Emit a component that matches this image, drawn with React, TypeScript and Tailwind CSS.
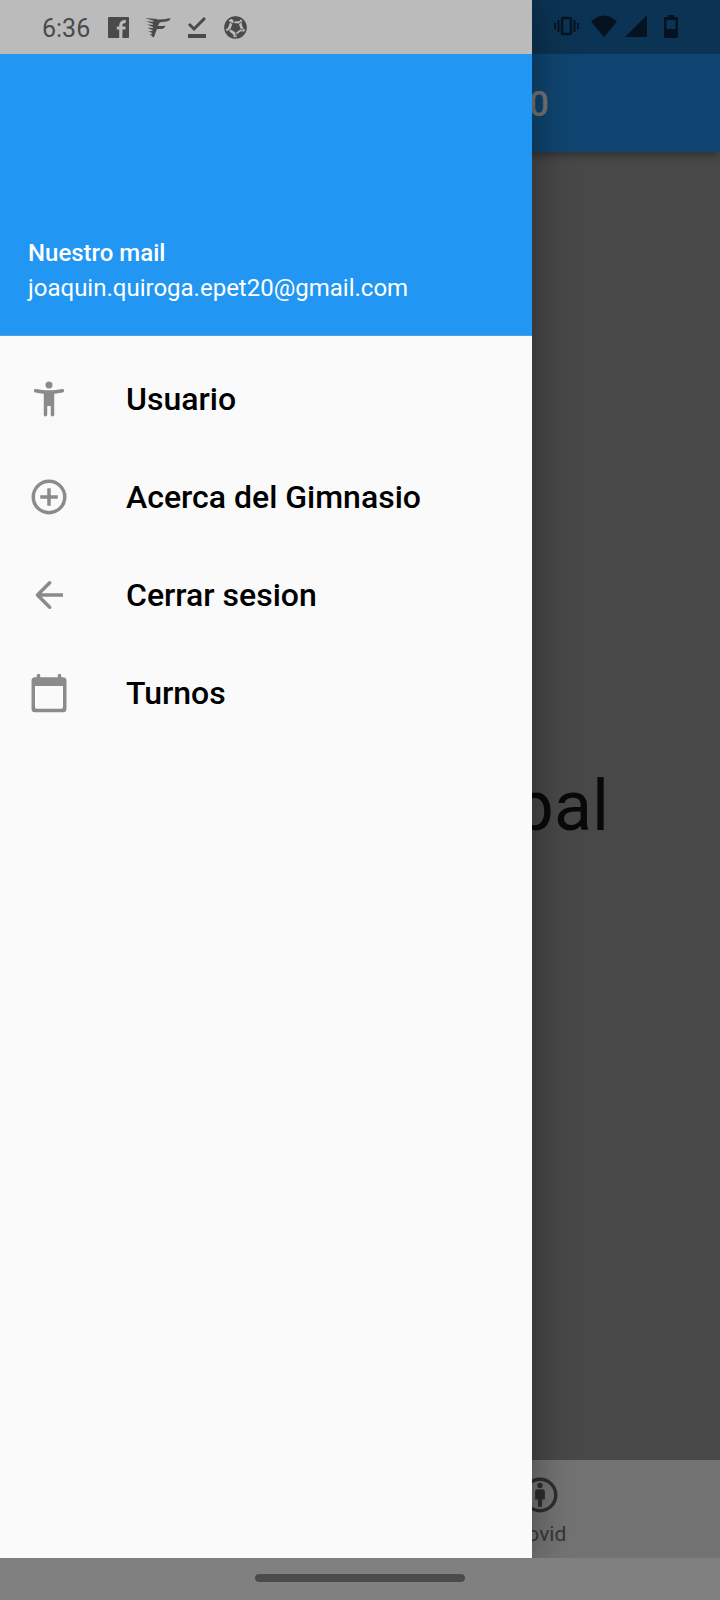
import type { ReactNode } from "react";

function DrawerIcon({ children }: { children: ReactNode }) {
  return (
    <svg viewBox="0 0 24 24" className="size-[42px] shrink-0 text-[#8b8b8b]" fill="currentColor" aria-hidden="true">
      {children}
    </svg>
  );
}

const items = [
  {
    label: "Usuario",
    icon: (
      <>
        <circle cx="12" cy="4" r="2" />
        <path d="M9 9v12a1 1 0 0 0 2 0v-5h2v5a1 1 0 0 0 2 0V9c1.600-.14 3.300-.38 4.850-.73a1 1 0 0 0 .75-1.220 1 1 0 0 0-1.210-.75C17.060 6.800 14.470 7 12 7s-5.060-.2-7.390-.7a1 1 0 0 0-1.210.75 1 1 0 0 0 .75 1.220C5.700 8.620 7.400 8.860 9 9z" />
      </>
    ),
  },
  {
    label: "Acerca del Gimnasio",
    icon: (
      <g fill="none" stroke="currentColor" strokeWidth="2">
        <circle cx="12" cy="12" r="9" />
        <path d="M12 7v10M7 12h10" />
      </g>
    ),
  },
  {
    label: "Cerrar sesion",
    icon: <path d="M20 11H7.830l5.300-5.300a1 1 0 0 0-1.420-1.410l-7 7a1 1 0 0 0 0 1.420l7 7a1 1 0 0 0 1.420-1.410L7.830 13H20z" />,
  },
  {
    label: "Turnos",
    icon: (
      <path
        fillRule="evenodd"
        d="M20 3h-1V2a1 1 0 0 0-2 0v1H7V2a1 1 0 0 0-2 0v1H4a2 2 0 0 0-2 2v16a2 2 0 0 0 2 2h16a2 2 0 0 0 2-2V5a2 2 0 0 0-2-2zM4 8h16v12a1 1 0 0 1-1 1H5a1 1 0 0 1-1-1z"
      />
    ),
  },
];

function StatusBar() {
  return (
    <div className="absolute inset-x-0 top-0 flex h-[54px] items-center justify-between bg-black/25 pr-[42px] pl-[42px]">
      <div className="flex items-center text-[#4a4a4a]">
        <time className="w-[66px] pt-1 text-[25px] leading-7">6:36</time>
        <svg viewBox="0 0 21 21" className="size-[21px]" aria-hidden="true">
          <rect width="21" height="21" rx="1" fill="currentColor" />
          <path d="M12.800 21V8.500q0-4.200 5-4M8.800 11h8.700" fill="none" stroke="#bbbbbb" strokeWidth="3.200" />
        </svg>
        <svg viewBox="0 0 26 21" className="ml-4 h-[21px] w-[26px]" aria-hidden="true">
          <path
            fill="currentColor"
            d="M9 2.500Q18 3 25.500 1q-.5 3-4 3.500l-5 .4q-2 .2-2.700 2L13 9h4q2 0 3.500-.5-1 3.300-4 3.500h-4.500l-1.500 4Q9.500 19.500 8.500 20.500L6.500 19l.5-3 1-5 0-5z"
          />
          <path
            fill="currentColor"
            d="M0 1l12 1v3zM1 4.300l11 .7-1 3zM2 7.500l9 .5-1 3zM2.500 10.800l8 .4-1 3zM3.500 14l6 .3-.5 3zM4.500 17l4.500.3-1 2.200z"
          />
        </svg>
        <svg viewBox="0 0 18 21" className="ml-[17px] h-[21px] w-[18px]" fill="none" stroke="currentColor" aria-hidden="true">
          <path d="M1 7l5 5L17 1" strokeWidth="3" />
          <path d="M0 19h18" strokeWidth="4" />
        </svg>
        <svg viewBox="0 0 24 24" className="ml-[18px] size-[23px]" fill="currentColor" aria-hidden="true">
          <circle cx="12" cy="12" r="11" fill="none" stroke="currentColor" strokeWidth="1.600" />
          <path d="M9 7.300l6.500.5 1.800 5.900-4.800 3.800-5.700-3.800zM6.500 1.700l5.500-1.200 6 1.700-1.500 3-5.500.6zM19.500 3.500l3.500 5.500.3 5-3-.5-2-5.500zM22 16.500l-4.500 5-4.500 1.300.5-3.800 4-3zM10 23.500l-5.500-2.500-3-4.500 3.500-1 4.800 4zM.8 14l.5-6L4.500 3.500 6 7.500 4 12.800z" />
          <path d="M9.500 8L5 6M15.500 8l3-2M17 13.500l3 1M12.500 17v4M7.500 13.500L3.500 16M11 4.500l-1 3" fill="none" stroke="currentColor" strokeWidth="1" />
        </svg>
      </div>
      <div className="flex items-center pb-[2px] text-[#04131f]">
        <svg viewBox="0 0 25 20" className="h-[20px] w-[25px]" fill="none" stroke="currentColor" strokeWidth="2" aria-hidden="true">
          <rect x="8" y="2" width="9" height="16" rx="1" strokeWidth="2.500" />
          <path d="M1 7v6M4.500 4v12M20.500 4v12M24 7v6" />
        </svg>
        <svg viewBox="0 0 26 22" className="ml-3 h-[22px] w-[26px]" fill="currentColor" aria-hidden="true">
          <path d="M0 6.500Q13-5.500 26 6.500L13 22z" />
        </svg>
        <svg viewBox="0 0 22 22" className="ml-2 size-[22px]" fill="currentColor" aria-hidden="true">
          <path d="M22 0v22H0z" />
        </svg>
        <svg viewBox="0 0 14 23" className="ml-[17px] h-[23px] w-[14px]" fill="currentColor" aria-hidden="true">
          <path fillRule="evenodd" d="M4 0h6v2h3a1 1 0 0 1 1 1v19a1 1 0 0 1-1 1H1a1 1 0 0 1-1-1V3a1 1 0 0 1 1-1h3zM2.500 5v9h9V5z" />
        </svg>
      </div>
    </div>
  );
}

export default function App() {
  return (
    <div className="relative flex min-h-screen flex-col bg-[#808080] font-[Roboto,sans-serif]">
      <div className="relative flex flex-1 flex-col overflow-hidden bg-[#9d9d9d]">
        <header className="z-0 bg-[#2196f3] pt-[54px] shadow-[0_4px_8px_rgba(0,0,0,0.3)]">
          <h1 className="flex h-[98px] items-center justify-end pt-1 pr-[171px] text-[35px] font-medium text-white">
            EPET 20
          </h1>
        </header>
        <main className="flex flex-1 items-center justify-end pr-[111px]">
          <p className="text-[70px] leading-[84px] text-black/87">Principal</p>
        </main>
        <nav className="grid h-[98px] grid-cols-2 bg-[#fbfbfb] text-[21px] leading-6 text-[#757575]">
          <a href="#inicio" className="flex flex-col items-center pt-[14px] gap-[6px]">
            <svg viewBox="0 0 24 24" className="size-[42px]" fill="currentColor" aria-hidden="true">
              <path d="M10 20v-6h4v6h5v-8h3L12 3 2 12h3v8z" />
            </svg>
            Inicio
          </a>
          <a href="#covid" className="flex flex-col items-center pt-[14px] gap-[6px]">
            <svg viewBox="0 0 24 24" className="size-[42px] text-[#646464]" fill="currentColor" aria-hidden="true">
              <circle cx="12" cy="12" r="9" fill="none" stroke="currentColor" strokeWidth="2" />
              <circle cx="12" cy="6.500" r="1.500" />
              <path d="M10.700 8.700h2.600q1.500 0 1.500 1.500v4.300h-1.600v3.300a1.200 1.200 0 0 1-2.400 0v-3.300H9.200v-4.300q0-1.500 1.500-1.500z" />
            </svg>
            Covid
          </a>
        </nav>
        <div className="absolute inset-0 bg-black/54" />
        <aside className="absolute inset-y-0 left-0 w-[532px] max-w-full bg-[#fafafa] pt-[54px] shadow-[0_0_40px_rgba(0,0,0,0.4)]">
          <div className="flex h-[282px] flex-col justify-end border-b border-[#48a4ee] bg-[#2196f3] px-7 pb-[29px] text-[24px] leading-[35px] text-white">
            <strong className="font-medium">Nuestro mail</strong>
            <span>joaquin.quiroga.epet20@gmail.com</span>
          </div>
          <ul className="pt-[14px]">
            {items.map(({ label, icon }) => (
              <li key={label}>
                <button type="button" className="flex h-[98px] w-full items-center gap-14 px-7 text-left text-[32px] font-medium text-black">
                  <DrawerIcon>{icon}</DrawerIcon>
                  {label}
                </button>
              </li>
            ))}
          </ul>
        </aside>
      </div>
      <StatusBar />
      <div className="flex h-[42px] items-center justify-center bg-[#808080]">
        <div className="mb-[2px] h-2 w-[210px] rounded-full bg-[#4b4b4b]" />
      </div>
    </div>
  );
}
